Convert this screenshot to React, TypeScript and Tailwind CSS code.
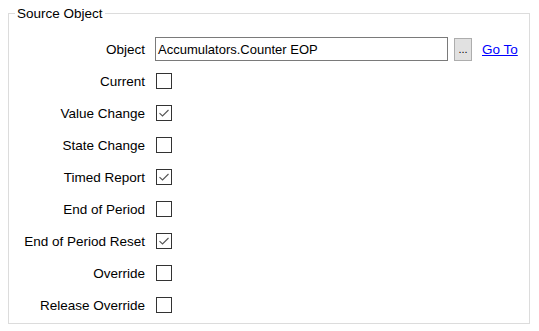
const options = [
  { label: "Current", checked: false },
  { label: "Value Change", checked: true },
  { label: "State Change", checked: false },
  { label: "Timed Report", checked: true },
  { label: "End of Period", checked: false },
  { label: "End of Period Reset", checked: true },
  { label: "Override", checked: false },
  { label: "Release Override", checked: false },
];

function CheckBox({ checked }: { checked: boolean }) {
  return (
    <div className="ml-[1px] w-4 h-4 border border-[#333333] bg-white flex items-center justify-center">
      {checked && (
        <svg width="12" height="12" viewBox="0 0 12 12" fill="none">
          <path d="M1.5 6.2 L4.5 9 L10.5 3" stroke="#555555" strokeWidth="1.1" />
        </svg>
      )}
    </div>
  );
}

export default function App() {
  return (
    <div className="w-[539px] h-[331px] bg-white px-2 pt-[6px] font-['Liberation_Sans',Arial,sans-serif] text-[13.5px] leading-[15px] text-black">
      <fieldset className="w-[522px] border border-[#dcdcdc] pt-[12px] pb-[2px]">
        <legend className="ml-[6px] px-[2px] leading-[15px]">Source Object</legend>
        <div className="grid grid-cols-[136px_1fr] gap-x-[10px] auto-rows-[32px] items-center">
          <div className="text-right">Object</div>
          <div className="flex items-center">
            <div className="w-[293px] h-[24px] border border-[#7a7a7a] pl-[2px] flex items-center text-[13px]">
              Accumulators.Counter EOP
            </div>
            <button className="ml-[6px] w-[18px] h-[23px] bg-[#e1e1e1] border border-[#adadad] text-[11px] leading-none flex items-end justify-center pb-[5px]">
              ...
            </button>
            <a className="ml-[10px] text-[#0000ff] underline cursor-pointer">Go To</a>
          </div>
          {options.map((o) => (
            <div key={o.label} className="contents">
              <div className="text-right">{o.label}</div>
              <CheckBox checked={o.checked} />
            </div>
          ))}
        </div>
      </fieldset>
    </div>
  );
}
